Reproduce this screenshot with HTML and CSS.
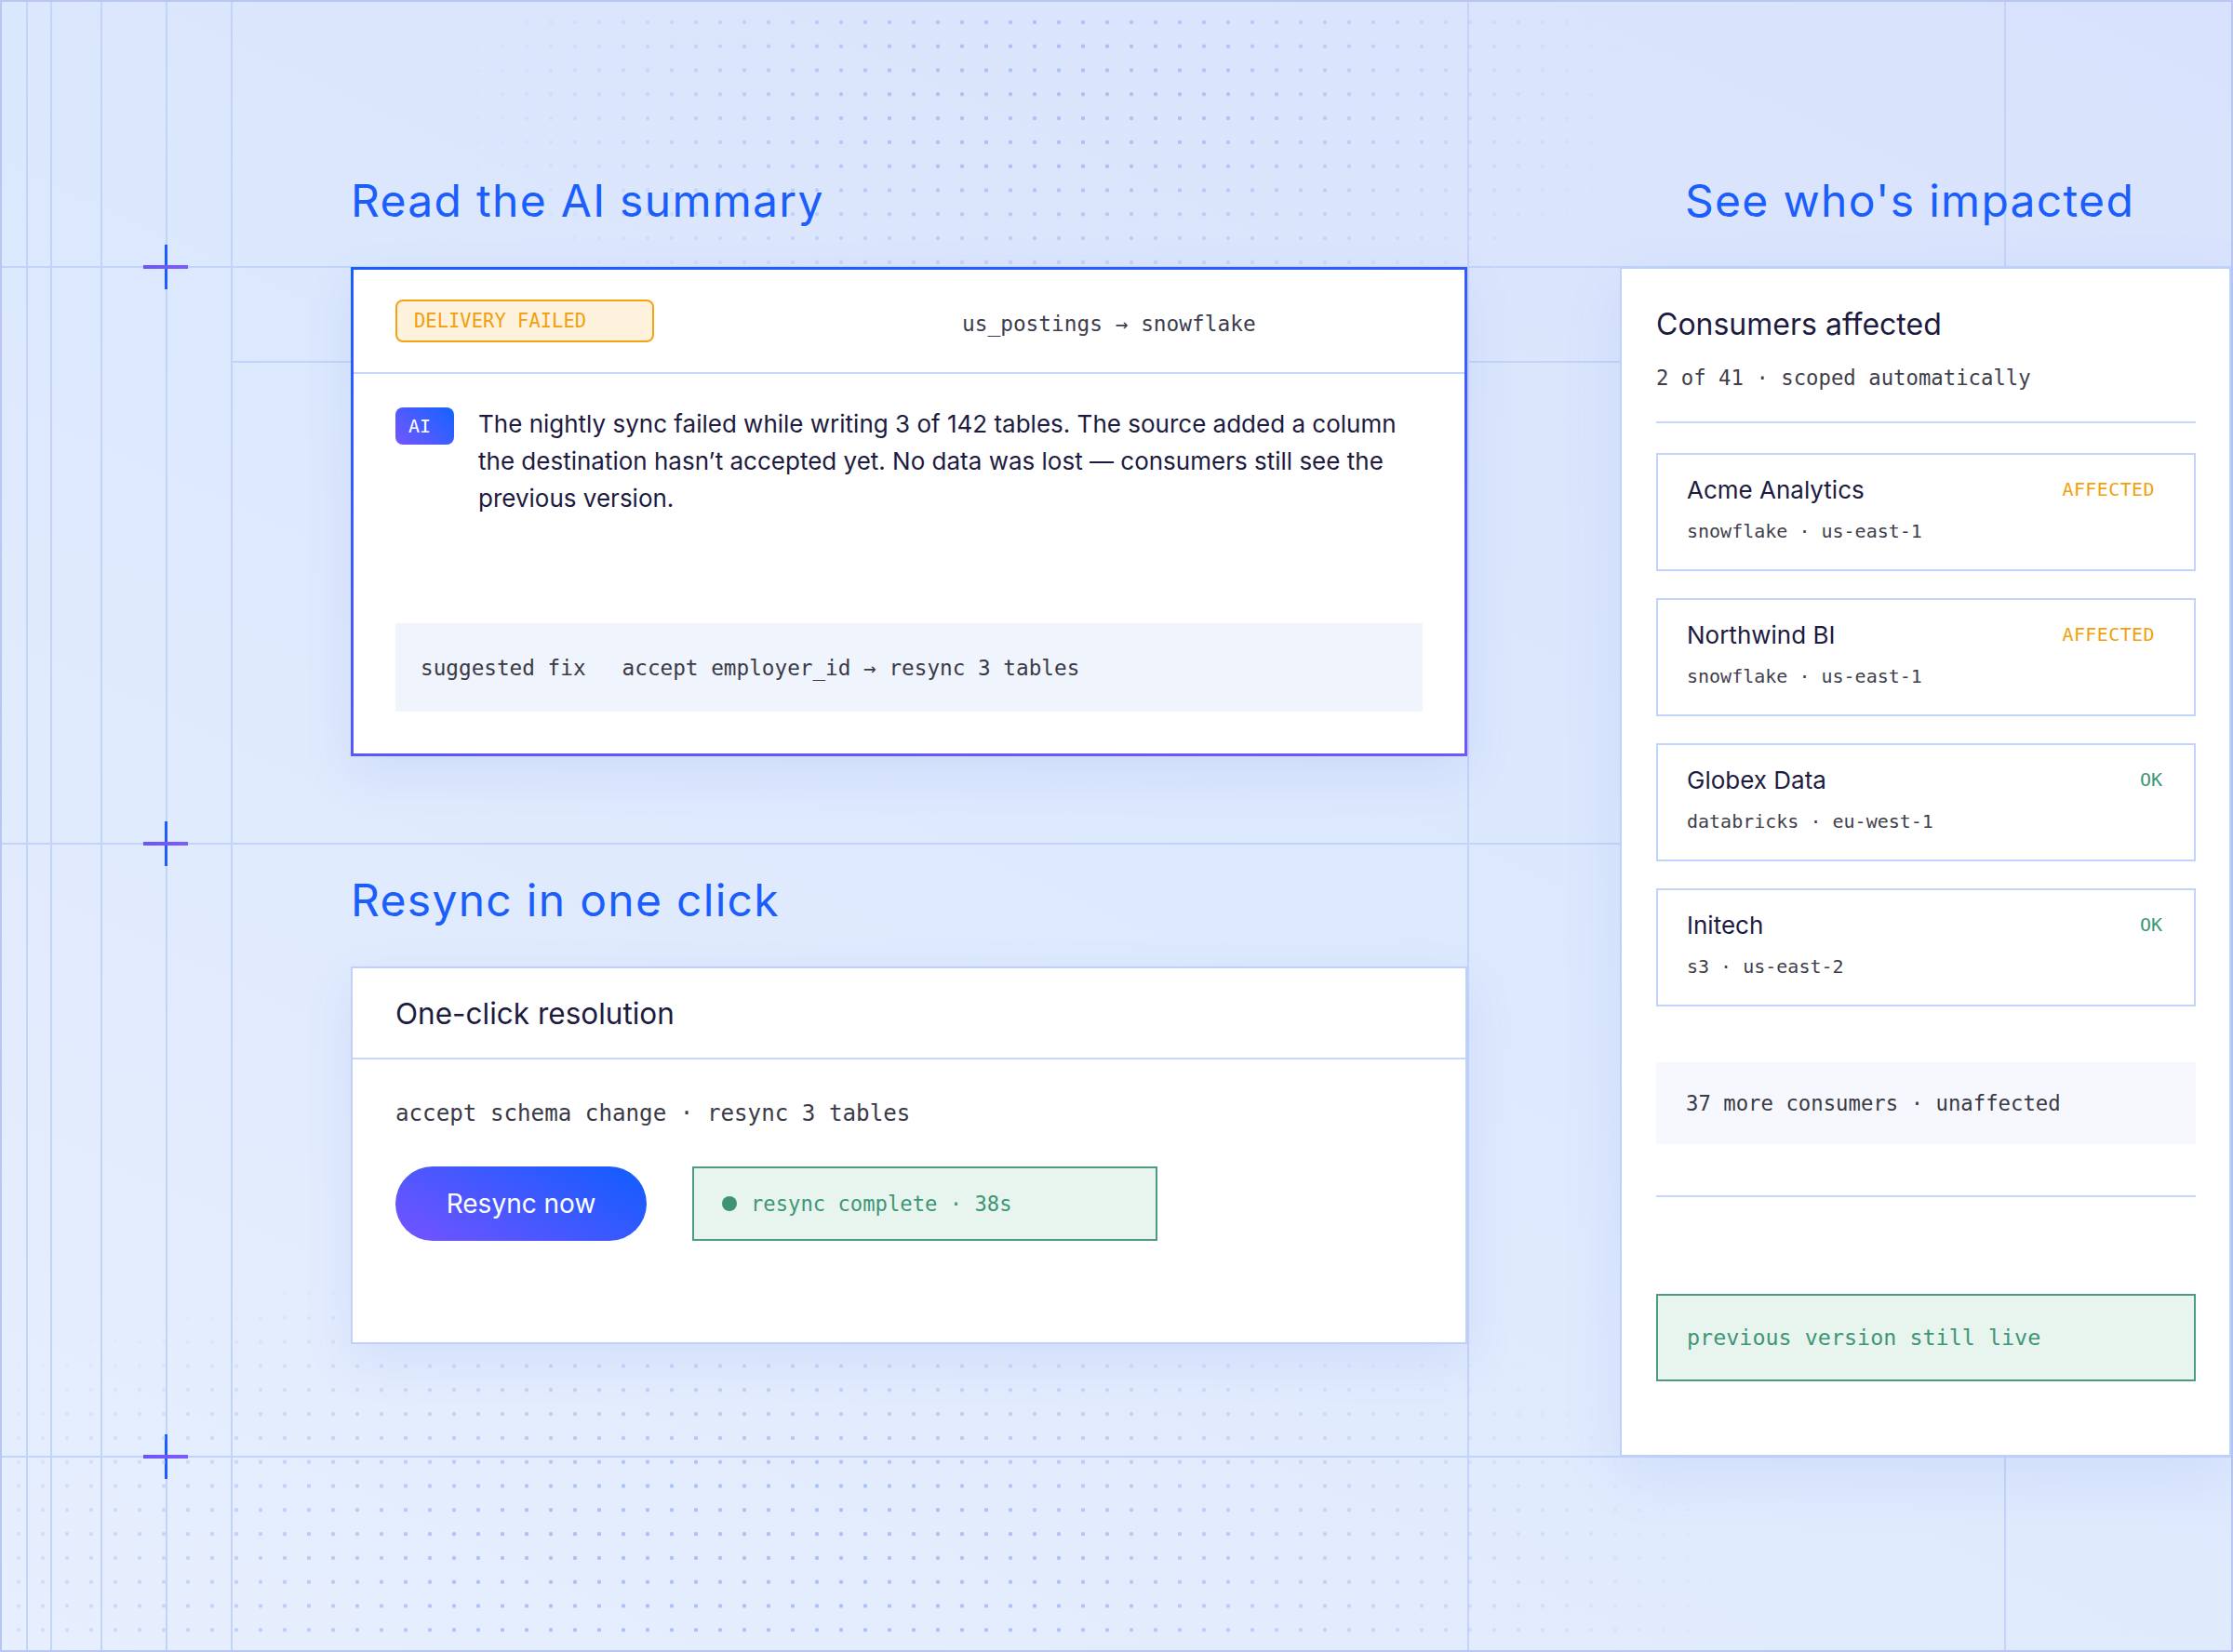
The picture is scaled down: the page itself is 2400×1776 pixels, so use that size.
FILE: index.html
```html
<!DOCTYPE html>
<html lang="en">
<head>
    <meta charset="UTF-8">
    <meta name="viewport" content="width=device-width, initial-scale=1.0">
    <title>Incident overview</title>
    <link rel="stylesheet" href="styles.css">
</head>
<body>
    <div class="board">
        <main class="main">
            <h2 class="section-title">Read the AI summary</h2>
            <section class="card card-summary">
                <header class="summary-head">
                    <span class="badge-failed">DELIVERY FAILED</span>
                    <span class="route">us_postings → snowflake</span>
                </header>
                <div class="summary-body">
                    <div class="summary-text">
                        <span class="ai-chip">AI</span>
                        <p>The nightly sync failed while writing 3 of 142 tables. The source added a column the destination hasn’t accepted yet. No data was lost — consumers still see the previous version.</p>
                    </div>
                    <div class="fix-box">
                        <span>suggested fix</span>
                        <span>accept employer_id → resync 3 tables</span>
                    </div>
                </div>
            </section>

            <h2 class="section-title second">Resync in one click</h2>
            <section class="card card-resync">
                <header class="resync-head">One-click resolution</header>
                <div class="resync-body">
                    <p class="resync-plan">accept schema change · resync 3 tables</p>
                    <div class="resync-actions">
                        <button class="btn-resync" type="button">Resync now</button>
                        <div class="resync-status"><span class="dot"></span>resync complete · 38s</div>
                    </div>
                </div>
            </section>
        </main>

        <aside class="side">
            <h2 class="section-title side-title">See who's impacted</h2>
            <section class="impact-panel">
                <h3>Consumers affected</h3>
                <p class="impact-sub">2 of 41 · scoped automatically</p>
                <hr class="panel-rule">
                <ul class="consumer-list">
                    <li class="consumer">
                        <div class="consumer-row">
                            <span class="consumer-name">Acme Analytics</span>
                            <span class="status affected">AFFECTED</span>
                        </div>
                        <div class="consumer-meta">snowflake · us-east-1</div>
                    </li>
                    <li class="consumer">
                        <div class="consumer-row">
                            <span class="consumer-name">Northwind BI</span>
                            <span class="status affected">AFFECTED</span>
                        </div>
                        <div class="consumer-meta">snowflake · us-east-1</div>
                    </li>
                    <li class="consumer">
                        <div class="consumer-row">
                            <span class="consumer-name">Globex Data</span>
                            <span class="status ok">OK</span>
                        </div>
                        <div class="consumer-meta">databricks · eu-west-1</div>
                    </li>
                    <li class="consumer">
                        <div class="consumer-row">
                            <span class="consumer-name">Initech</span>
                            <span class="status ok">OK</span>
                        </div>
                        <div class="consumer-meta">s3 · us-east-2</div>
                    </li>
                </ul>
                <div class="more-box">37 more consumers · unaffected</div>
                <hr class="panel-rule lower">
                <div class="live-box">previous version still live</div>
            </section>
        </aside>
    </div>
</body>
</html>
```

FILE: styles.css
```css
* {
    box-sizing: border-box;
}

body {
    margin: 0;
    font-family: Inter, "Noto Sans", sans-serif;
    color: #1d1b3f;
}

/* page canvas: guide lines + cross marks drawn as background layers */
.board {
    --guide: #c3d4fa;
    --arm-h: linear-gradient(90deg, #6a56f6, #7d5cff);
    --arm-v: linear-gradient(#1d5cff, #1d5cff);
    position: relative;
    width: 2400px;
    height: 1776px;
    overflow: hidden;
    display: flex;
    align-items: flex-start;
    gap: 164px;
    padding: 187px 0 0 377px;
    box-shadow: inset 0 0 0 2px #b7c7f1;
    background:
        var(--arm-h) 154px 285px / 48px 4px no-repeat,
        var(--arm-h) 154px 905px / 48px 4px no-repeat,
        var(--arm-h) 154px 1564px / 48px 4px no-repeat,
        var(--arm-v) 177px 263px / 3px 48px no-repeat,
        var(--arm-v) 177px 883px / 3px 48px no-repeat,
        var(--arm-v) 177px 1542px / 3px 48px no-repeat,
        linear-gradient(var(--guide), var(--guide)) 0 286px / 100% 2px no-repeat,
        linear-gradient(var(--guide), var(--guide)) 249px 388px / 100% 2px no-repeat,
        linear-gradient(var(--guide), var(--guide)) 0 906px / 100% 2px no-repeat,
        linear-gradient(var(--guide), var(--guide)) 0 1565px / 100% 2px no-repeat,
        linear-gradient(var(--guide), var(--guide)) 28px 0 / 2px 100% no-repeat,
        linear-gradient(var(--guide), var(--guide)) 54px 0 / 2px 100% no-repeat,
        linear-gradient(var(--guide), var(--guide)) 108px 0 / 2px 100% no-repeat,
        linear-gradient(var(--guide), var(--guide)) 178px 0 / 2px 100% no-repeat,
        linear-gradient(var(--guide), var(--guide)) 248px 0 / 2px 100% no-repeat,
        linear-gradient(var(--guide), var(--guide)) 1577px 0 / 2px 100% no-repeat,
        linear-gradient(var(--guide), var(--guide)) 2154px 0 / 2px 100% no-repeat,
        linear-gradient(205deg, #d9e2fc 0%, #dce8fd 45%, #e7effe 100%);
}

/* dot pattern, faded in two soft patches */
.board::before {
    content: "";
    position: absolute;
    inset: 0;
    pointer-events: none;
    background: radial-gradient(circle, #abc1f4 1.9px, transparent 2.5px) 7px 11px / 26px 25.8px;
    -webkit-mask-image:
        radial-gradient(ellipse 640px 300px at 1120px 110px, #000 25%, transparent 100%),
        radial-gradient(ellipse 1050px 380px at 820px 1700px, #000 30%, transparent 100%);
    mask-image:
        radial-gradient(ellipse 640px 300px at 1120px 110px, #000 25%, transparent 100%),
        radial-gradient(ellipse 1050px 380px at 820px 1700px, #000 30%, transparent 100%);
}

.main,
.side {
    position: relative;
}

.main {
    width: 1200px;
}

.side {
    width: 657px;
}

.section-title {
    margin: 0 0 43px;
    font-size: 48px;
    font-weight: 400;
    line-height: 57px;
    letter-spacing: 0.027em;
    color: #1b5efc;
}

.section-title.second {
    margin-top: 126px;
}

.side-title {
    padding-left: 70px;
}

.route,
.badge-failed,
.ai-chip,
.fix-box,
.resync-plan,
.resync-status,
.impact-sub,
.status,
.consumer-meta,
.more-box,
.live-box {
    font-family: "DejaVu Sans Mono", "Liberation Mono", monospace;
}

.card {
    background: #fff;
    box-shadow: 0 18px 50px rgba(70, 110, 230, 0.1);
}

/* AI summary card */
.card-summary {
    border: 3px solid;
    border-image: linear-gradient(170deg, #1b5efc, #6f56ff) 1;
}

.summary-head {
    display: flex;
    align-items: center;
    height: 112px;
    padding: 0 45px;
    border-bottom: 2px solid #c6d7fb;
}

.badge-failed {
    display: flex;
    align-items: center;
    width: 278px;
    height: 46px;
    padding-left: 18px;
    border: 2px solid #f4a313;
    border-radius: 8px;
    background: #fff2dc;
    color: #f0a00e;
    font-size: 20.5px;
}

.route {
    margin: 6px 0 0 331px;
    font-size: 22.8px;
    color: #3d3d4b;
}

.summary-body {
    padding: 34px 45px 45px;
}

.summary-text {
    display: flex;
    align-items: flex-start;
    gap: 26px;
}

.ai-chip {
    flex: none;
    display: flex;
    align-items: center;
    width: 63px;
    height: 40px;
    margin-top: 2px;
    padding-left: 14px;
    border-radius: 8px;
    background: linear-gradient(45deg, #7356ff, #1463ff);
    color: #fff;
    font-size: 20px;
}

.summary-text p {
    margin: 0;
    font-size: 26px;
    line-height: 40px;
}

.fix-box {
    display: flex;
    align-items: center;
    gap: 39px;
    height: 95px;
    margin-top: 114px;
    padding: 0 27px;
    background: #f0f4fd;
    font-size: 22.7px;
    color: #3a3a48;
}

/* resync card */
.card-resync {
    border: 2px solid #bed1fa;
}

.resync-head {
    display: flex;
    align-items: center;
    height: 98px;
    padding: 0 46px;
    border-bottom: 2px solid #c6d7fb;
    font-size: 31.5px;
}

.resync-body {
    padding: 41px 46px 109px;
}

.resync-plan {
    margin: 0;
    font-size: 24.2px;
    line-height: 34px;
    color: #3a3a48;
}

.resync-actions {
    display: flex;
    gap: 49px;
    margin-top: 40px;
}

.btn-resync {
    width: 270px;
    height: 80px;
    padding: 0;
    border: none;
    border-radius: 40px;
    background: linear-gradient(30deg, #7553ff, #1a5cff 90%);
    color: #fff;
    font-family: Inter, sans-serif;
    font-size: 28px;
    cursor: pointer;
}

.resync-status {
    display: flex;
    align-items: center;
    gap: 15px;
    width: 500px;
    height: 80px;
    padding-left: 30px;
    border: 2px solid #4d9c7f;
    background: #e8f5ef;
    color: #3f9677;
    font-size: 22.2px;
}

.dot {
    width: 16px;
    height: 16px;
    border-radius: 50%;
    background: #3f9275;
}

/* impacted consumers panel */
.impact-panel {
    padding: 40px 36px 79px 37px;
    border: 2px solid #bed1fa;
    background: #fff;
    box-shadow: 0 20px 60px rgba(70, 110, 230, 0.1);
}

.impact-panel h3 {
    margin: 0;
    font-size: 32px;
    font-weight: 400;
    line-height: 40px;
}

.impact-sub {
    margin: 22px 0 0;
    font-size: 22.3px;
    line-height: 30px;
    color: #3f3f4c;
}

.panel-rule {
    height: 2px;
    margin: 32px 0 0;
    border: none;
    background: #c6d7fb;
}

.panel-rule.lower {
    margin-top: 55px;
}

.consumer-list {
    display: flex;
    flex-direction: column;
    gap: 29px;
    margin: 32px 0 0;
    padding: 0;
    list-style: none;
}

.consumer {
    height: 127px;
    padding: 19px 34px 0 31px;
    border: 2px solid #c2d4fb;
}

.consumer-row {
    display: flex;
    align-items: center;
    justify-content: space-between;
    height: 36px;
}

.consumer-name {
    font-size: 26px;
}

.status {
    font-size: 20px;
}

.status.affected {
    margin-right: 8px;
    letter-spacing: 0.02em;
    color: #f2a20c;
}

.status.ok {
    color: #3f9677;
}

.consumer-meta {
    margin-top: 13px;
    font-size: 20px;
    line-height: 28px;
    color: #3f3f4c;
}

.more-box {
    display: flex;
    align-items: center;
    height: 88px;
    margin-top: 60px;
    padding-left: 32px;
    background: #f6f8fe;
    font-size: 22.3px;
    color: #3a3a46;
}

.live-box {
    display: flex;
    align-items: center;
    height: 94px;
    margin-top: 104px;
    padding-left: 31px;
    border: 2px solid #4d9c7f;
    background: #e8f5ef;
    color: #3f9677;
    font-size: 23.4px;
}
```
